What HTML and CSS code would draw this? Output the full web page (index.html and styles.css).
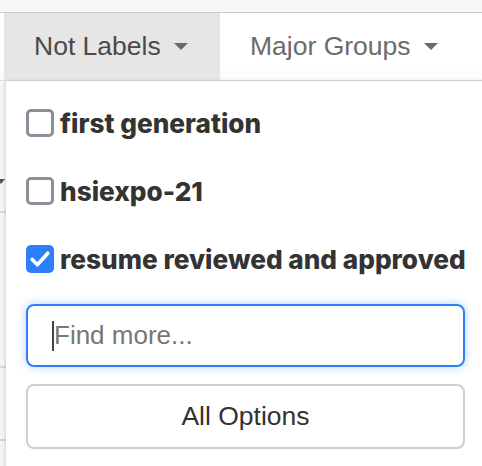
FILE: index.html
```html
<!DOCTYPE html>
<html lang="en">
<head>
    <meta charset="UTF-8">
    <meta name="viewport" content="width=device-width, initial-scale=1.0">
    <title>Filters</title>
    <link rel="stylesheet" href="styles.css">
</head>
<body>
    <div class="page">
        <div class="topbar"></div>
        <div class="tabs">
            <div class="tab active">Not Labels <span class="caret"></span></div>
            <div class="tab">Major Groups <span class="caret"></span></div>
        </div>
        <div class="behind">
            <div class="row-line one"><span class="mini-caret"></span></div>
            <div class="row-line two"></div>
            <div class="row-line three"></div>
        </div>

        <div class="dropdown">
            <label class="option">
                <input type="checkbox">
                <span>first generation</span>
            </label>
            <label class="option">
                <input type="checkbox">
                <span>hsiexpo-21</span>
            </label>
            <label class="option">
                <input type="checkbox" checked>
                <span>resume reviewed and approved</span>
            </label>
            <div class="search">
                <span class="cursor"></span>
                <span class="placeholder">Find more...</span>
            </div>
            <button class="all-options">All Options</button>
        </div>
    </div>
</body>
</html>
```

FILE: styles.css
```css
* {
    box-sizing: border-box;
    margin: 0;
    padding: 0;
}

body {
    font-family: 'Liberation Sans', Arial, sans-serif;
    background-color: #f7f7f7;
    width: 482px;
    height: 466px;
    overflow: hidden;
}

.page {
    position: relative;
    height: 466px;
}

.topbar {
    height: 13px;
    background-color: #f7f7f7;
    border-bottom: 1px solid #cacaca;
}

.tabs {
    display: flex;
    height: 68px;
    background: linear-gradient(#ffffff 80%, #fafafa);
    border-bottom: 1px solid #dcdcdc;
    padding-left: 4px;
}

.tab {
    display: flex;
    align-items: center;
    padding: 0 30px;
    font-size: 26.5px;
    color: #6b6b6b;
}

.tab.active {
    width: 216px;
    background-color: #e6e6e6;
    color: #4a4a4a;
}

.caret {
    display: inline-block;
    margin-left: 13px;
    width: 0;
    height: 0;
    border-left: 7px solid transparent;
    border-right: 7px solid transparent;
    border-top: 7px solid #6a6a6a;
}

.behind {
    background-color: #f4f4f4;
    height: 385px;
}

.row-line {
    position: relative;
    border-bottom: 2px solid #d8d8d8;
}

.row-line.one {
    height: 132px;
}

.row-line.two {
    height: 155px;
}

.row-line.three {
    height: 73px;
}

.mini-caret {
    position: absolute;
    left: 0;
    top: 98px;
    border-left: 4px solid transparent;
    border-right: 4px solid transparent;
    border-top: 5px solid #555;
    margin-left: -3px;
}

.dropdown {
    position: absolute;
    left: 6px;
    top: 81px;
    right: -20px;
    bottom: -20px;
    background-color: #ffffff;
    box-shadow: -1px 0 3px rgba(0, 0, 0, 0.15);
    padding: 8px 37px 0 20px;
}

.option {
    display: flex;
    align-items: center;
    height: 68px;
    white-space: nowrap;
    font-family: Inter, 'Liberation Sans', sans-serif;
    font-weight: 800;
    font-size: 26.2px;
    color: #333;
}

.option input {
    appearance: none;
    flex: 0 0 28px;
    width: 28px;
    height: 28px;
    border: 3.5px solid #8e8e99;
    border-radius: 5px;
    margin-right: 6px;
    background-color: #fff;
}

.option input:checked {
    border: none;
    background-color: #2d7ff9;
    background-image: url("data:image/svg+xml,%3Csvg xmlns='http://www.w3.org/2000/svg' viewBox='0 0 27 27'%3E%3Cpath d='M6 14 L11 19 L21 8' fill='none' stroke='white' stroke-width='3.5' stroke-linecap='round' stroke-linejoin='round'/%3E%3C/svg%3E");
}

.search {
    display: flex;
    align-items: center;
    height: 63px;
    margin-top: 11px;
    border: 2px solid #2d7ff9;
    border-radius: 8px;
    box-shadow: 0 0 10px rgba(45, 127, 249, 0.35);
    padding-left: 24px;
    font-size: 26px;
    color: #777;
}

.cursor {
    width: 2px;
    height: 30px;
    background-color: #444;
}

.all-options {
    display: block;
    width: 100%;
    height: 65px;
    margin-top: 17px;
    background-color: #fff;
    border: 2px solid #cfcfcf;
    border-radius: 8px;
    font-family: 'Liberation Sans', Arial, sans-serif;
    font-size: 26.5px;
    color: #333;
}
```
